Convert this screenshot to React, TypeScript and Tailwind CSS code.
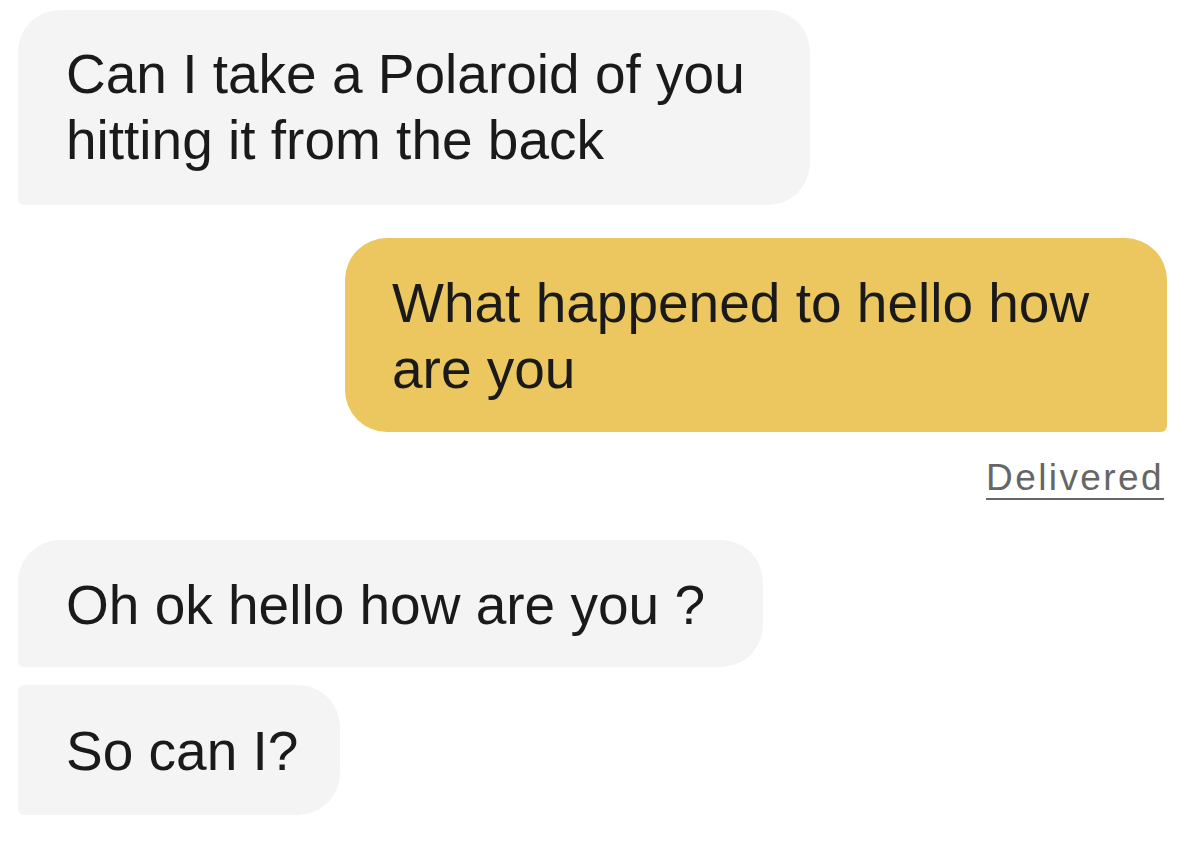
import React from 'react';

const font = { fontFamily: '"Liberation Sans", Arial, sans-serif' };

type Msg = { text: React.ReactNode; className: string };

const Bubble: React.FC<Msg> = ({ text, className }) => (
  <div className={`text-[55px] leading-[66px] text-[#1a1a1a] ${className}`}>{text}</div>
);

export default function App() {
  return (
    <div className="w-[1188px] h-[866px] bg-white overflow-hidden" style={font}>
      <div className="flex flex-col pt-[10px] pl-[18px] pr-[21px]">
        {/* incoming */}
        <Bubble
          text="Can I take a Polaroid of you hitting it from the back"
          className="w-[792px] bg-[#f4f4f4] pl-[48px] pr-[50px] pt-[31px] pb-[32px] rounded-tl-[42px] rounded-tr-[42px] rounded-br-[42px] rounded-bl-[6px]"
        />

        {/* outgoing */}
        <div className="flex flex-col items-end mt-[33px]">
          <Bubble
            text="What happened to hello how are you"
            className="w-[822px] bg-[#ecc75f] pl-[47px] pr-[50px] pt-[32px] pb-[30px] rounded-tl-[42px] rounded-tr-[42px] rounded-bl-[42px] rounded-br-[6px]"
          />
          <span className="mt-[24px] mr-[3px] text-[37px] leading-[44px] tracking-[2.4px] text-[#666666] underline decoration-2 underline-offset-[8px]">
            Delivered
          </span>
        </div>

        {/* incoming */}
        <div className="flex flex-col gap-[18px] mt-[40px]">
          <Bubble
            text="Oh ok hello how are you ?"
            className="w-[745px] whitespace-nowrap bg-[#f4f4f4] pl-[48px] pr-[50px] pt-[32px] pb-[29px] rounded-tl-[42px] rounded-tr-[42px] rounded-br-[42px] rounded-bl-[6px]"
          />
          <Bubble
            text="So can I?"
            className="w-[322px] whitespace-nowrap bg-[#f4f4f4] pl-[48px] pr-[40px] pt-[33px] pb-[31px] rounded-tl-[6px] rounded-tr-[42px] rounded-br-[42px] rounded-bl-[6px]"
          />
        </div>
      </div>
    </div>
  );
}
